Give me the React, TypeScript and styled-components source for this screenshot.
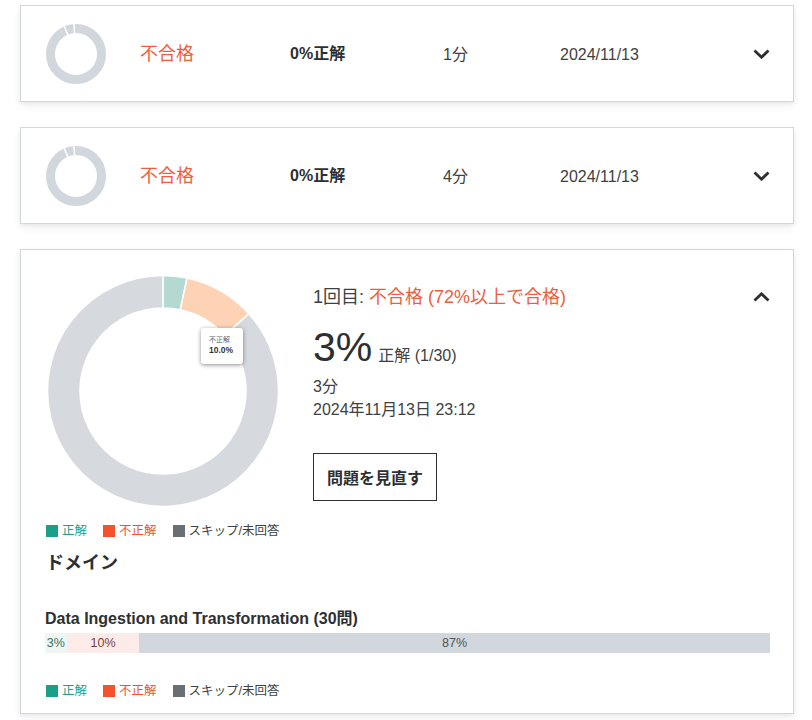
import React from 'react';
import styled, { createGlobalStyle } from 'styled-components';

let GlobalStyle = createGlobalStyle`
  body {
    margin: 0;
    background: #ffffff;
    font-family: "Liberation Sans", "Noto Sans CJK JP", sans-serif;
    color: #2d2f31;
  }
`;

let Page = styled.div`
  display: flex;
  flex-direction: column;
  gap: 25px;
  padding: 5px 18px 8px 20px;
`;

let Card = styled.div`
  box-sizing: border-box;
  background: #ffffff;
  border: 1px solid #d1d7dc;
  box-shadow: 0 2px 4px rgba(0, 0, 0, 0.06), 0 4px 10px rgba(0, 0, 0, 0.05);
`;

let SummaryRow = styled(Card)`
  height: 97px;
  display: grid;
  grid-template-columns: 94px 150px 153px 117px 1fr auto;
  align-items: center;
  padding: 0 23px 0 25px;
  line-height: 24px;
`;

let Status = styled.span`
  font-size: 18px;
  color: #ee5d3c;
`;

let Score = styled.span`
  font-size: 16px;
  font-weight: 700;
`;

let Plain = styled.span`
  font-size: 16px;
  color: #3e4143;
  padding-top: 2px;
`;

let ChevronButton = styled.button`
  background: transparent;
  border: none;
  padding: 0;
  display: flex;
  align-items: center;
  cursor: pointer;
`;

let DetailCard = styled(Card)`
  padding: 25px 23px 14px 24px;
`;

let Top = styled.div`
  display: flex;
  gap: 34px;
`;

let ChartColumn = styled.div`
  flex: none;
  width: 234px;
  display: flex;
  flex-direction: column;
`;

let ChartWrap = styled.div`
  position: relative;
  width: 232px;
  height: 232px;
  margin-left: 2px;
`;

let Tooltip = styled.div`
  position: absolute;
  left: 154px;
  top: 53px;
  width: 42px;
  height: 36px;
  box-sizing: border-box;
  padding: 8px 0 0 8px;
  background: #ffffff;
  border-radius: 3px;
  box-shadow: 0 1px 4px rgba(0, 0, 0, 0.45);
  line-height: 1;
`;

let TipLabel = styled.div`
  font-size: 7px;
  color: #666;
`;

let TipValue = styled.div`
  font-size: 8.5px;
  font-weight: 700;
  color: #333;
  margin-top: 3px;
`;

let Legend = styled.div<{ $top: number }>`
  display: flex;
  align-items: center;
  gap: 16px;
  margin: ${p => p.$top}px 0 0 1px;
  font-size: 12.5px;
  line-height: 16px;
  white-space: nowrap;
`;

let LegendItem = styled.span<{ $color: string; $text: string }>`
  display: flex;
  align-items: center;
  gap: 4px;
  color: ${p => p.$text};

  &::before {
    content: '';
    width: 12px;
    height: 12px;
    background: ${p => p.$color};
  }
`;

let InfoColumn = styled.div`
  flex: 1;
  padding-top: 10px;
`;

let TitleRow = styled.div`
  display: flex;
  align-items: center;
  justify-content: space-between;
  font-size: 18px;
  line-height: 24px;
  color: #3e4143;
`;

let Fail = styled.span`
  color: #ee5d3c;
`;

let Big = styled.div`
  margin-top: 14px;
  height: 48px;
  line-height: 48px;
  display: flex;
  align-items: baseline;
  gap: 6px;
`;

let BigNumber = styled.span`
  font-size: 41px;
`;

let BigCaption = styled.span`
  font-size: 16px;
  line-height: 1;
  color: #3e4143;
`;

let Meta = styled.div`
  font-size: 16px;
  line-height: 23px;
  color: #3e4143;
  margin-top: 4px;
`;

let ReviewButton = styled.button`
  margin-top: 32px;
  height: 48px;
  padding: 0 13px;
  border: 1px solid #2d2f31;
  background: #ffffff;
  font-family: inherit;
  font-size: 16px;
  font-weight: 700;
  color: #2d2f31;
  cursor: pointer;
`;

let SectionTitle = styled.h3`
  margin: 12px 0 0 1px;
  font-size: 18px;
  line-height: 24px;
  font-weight: 700;
`;

let DomainTitle = styled.div`
  margin-top: 34px;
  font-size: 16px;
  line-height: 20px;
  font-weight: 700;
`;

let Bar = styled.div`
  margin-top: 4px;
  display: flex;
  height: 20px;
  font-size: 12.5px;
`;

let BarPart = styled.div<{ $bg: string; $fg: string }>`
  display: flex;
  align-items: center;
  justify-content: center;
  background: ${p => p.$bg};
  color: ${p => p.$fg};
  white-space: nowrap;
`;

let Chevron = ({ up }: { up?: boolean }) => (
  <svg width="17" height="10" viewBox="0 0 17 10">
    <polyline
      points={up ? '1.5,8.5 8.5,1.8 15.5,8.5' : '1.5,1.5 8.5,8.2 15.5,1.5'}
      fill="none"
      stroke="#2d2f31"
      strokeWidth="2.8"
    />
  </svg>
);

let polar = (cx: number, cy: number, r: number, deg: number) => {
  let a = ((deg - 90) * Math.PI) / 180;
  return [cx + r * Math.cos(a), cy + r * Math.sin(a)];
};

let sector = (cx: number, cy: number, ro: number, ri: number, a0: number, a1: number) => {
  let large = a1 - a0 > 180 ? 1 : 0;
  let [x0, y0] = polar(cx, cy, ro, a0);
  let [x1, y1] = polar(cx, cy, ro, a1);
  let [x2, y2] = polar(cx, cy, ri, a1);
  let [x3, y3] = polar(cx, cy, ri, a0);
  return `M${x0} ${y0} A${ro} ${ro} 0 ${large} 1 ${x1} ${y1} L${x2} ${y2} A${ri} ${ri} 0 ${large} 0 ${x3} ${y3} Z`;
};

let MiniDonut = () => (
  <svg width="60" height="60" viewBox="0 0 60 60">
    <circle cx="30" cy="30" r="25.5" fill="none" stroke="#d1d7dc" strokeWidth="9" />
    {[-23, -4].map(a => {
      let [x0, y0] = polar(30, 30, 20, a);
      let [x1, y1] = polar(30, 30, 31, a);
      return <line key={a} x1={x0} y1={y0} x2={x1} y2={y1} stroke="#fff" strokeWidth="1.5" />;
    })}
  </svg>
);

let slices = [
  { value: 1 / 30, color: '#b3d9d1' },
  { value: 0.1, color: '#fed2b4' },
  { value: 1 - 1 / 30 - 0.1, color: '#d6dadf' },
];

let BigDonut = () => {
  let start = 0;
  return (
    <svg width="232" height="232" viewBox="0 0 232 232">
      {slices.map((s, i) => {
        let a0 = start;
        let a1 = start + s.value * 360;
        start = a1;
        return (
          <path
            key={i}
            d={sector(116, 116, 115.5, 83, a0, a1)}
            fill={s.color}
            stroke="#ffffff"
            strokeWidth="1.5"
          />
        );
      })}
    </svg>
  );
};

let Legends = ({ top }: { top: number }) => (
  <Legend $top={top}>
    <LegendItem $color="#1c9f88" $text="#1c9f88">正解</LegendItem>
    <LegendItem $color="#f4512c" $text="#f4512c">不正解</LegendItem>
    <LegendItem $color="#6a6f73" $text="#3e4143">スキップ/未回答</LegendItem>
  </Legend>
);

let attempts = [
  { time: '1分', date: '2024/11/13' },
  { time: '4分', date: '2024/11/13' },
];

let App = () => (
  <>
    <GlobalStyle />
    <Page>
      {attempts.map((a, i) => (
        <SummaryRow key={i}>
          <MiniDonut />
          <Status>不合格</Status>
          <Score>0%正解</Score>
          <Plain>{a.time}</Plain>
          <Plain>{a.date}</Plain>
          <ChevronButton aria-label="開く">
            <Chevron />
          </ChevronButton>
        </SummaryRow>
      ))}

      <DetailCard>
        <Top>
          <ChartColumn>
            <ChartWrap>
              <BigDonut />
              <Tooltip>
                <TipLabel>不正解</TipLabel>
                <TipValue>10.0%</TipValue>
              </Tooltip>
            </ChartWrap>
            <Legends top={16} />
          </ChartColumn>
          <InfoColumn>
            <TitleRow>
              <span>
                1回目: <Fail>不合格 (72%以上で合格)</Fail>
              </span>
              <ChevronButton aria-label="閉じる">
                <Chevron up />
              </ChevronButton>
            </TitleRow>
            <Big>
              <BigNumber>3%</BigNumber>
              <BigCaption>正解 (1/30)</BigCaption>
            </Big>
            <Meta>
              3分
              <br />
              2024年11月13日 23:12
            </Meta>
            <ReviewButton>問題を見直す</ReviewButton>
          </InfoColumn>
        </Top>
        <SectionTitle>ドメイン</SectionTitle>
        <DomainTitle>Data Ingestion and Transformation (30問)</DomainTitle>
        <Bar>
          <BarPart $bg="#eef5f3" $fg="#3b7267" style={{ width: '3%' }}>3%</BarPart>
          <BarPart $bg="#fdebe9" $fg="#7a3d35" style={{ width: '10%' }}>10%</BarPart>
          <BarPart $bg="#d1d7dc" $fg="#4f5458" style={{ width: '87%' }}>87%</BarPart>
        </Bar>
        <Legends top={30} />
      </DetailCard>
    </Page>
  </>
);

export default App;
